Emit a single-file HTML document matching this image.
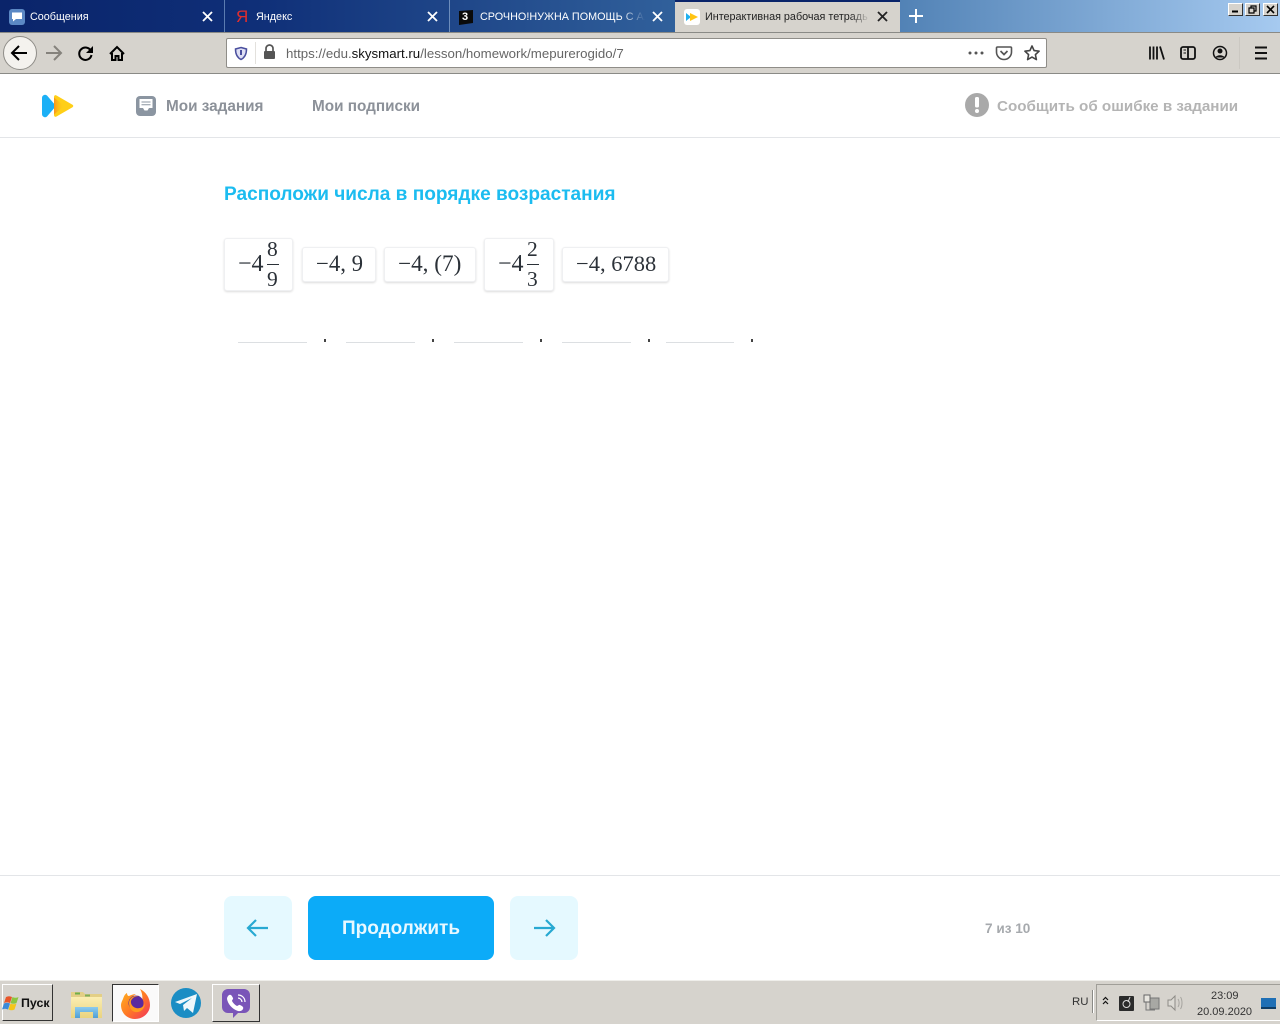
<!DOCTYPE html>
<html lang="ru"><head><meta charset="utf-8"><title>Интерактивная рабочая тетрадь</title>
<style>
html,body{margin:0;padding:0;width:1280px;height:1024px;overflow:hidden;background:#fff;font-family:"Liberation Sans","Noto Sans CJK SC",sans-serif}
.a,.t{position:absolute}
.t{white-space:nowrap;line-height:20px}
svg{position:absolute;overflow:visible}
.tab{font-size:10.8px;color:#fff;top:7px}
.card{position:absolute;box-sizing:border-box;background:#fff;border:1px solid #eff0f2;border-radius:3px;box-shadow:0 1px 2px rgba(0,0,0,.14)}
.m{font-family:"Liberation Serif","DejaVu Serif",serif;font-size:22.5px;color:#2b3138;position:absolute;white-space:nowrap;line-height:28px}
.slot{position:absolute;top:342px;height:1px;background:#dcdfe2;width:69px}
.p{position:absolute;top:339px;width:2px;height:3px;background:#444}
.nav{font-weight:bold;font-size:15.3px;color:#8c9199;top:97px}
.sq{position:absolute;top:896px;width:68px;height:64px;background:#e5f9ff;border-radius:8px}
.wb{position:absolute;top:3px;height:13px;background:#d6d3cd;border:1px solid #fff;border-right-color:#333;border-bottom-color:#333;box-sizing:border-box}
</style></head><body>

<div class="a" style="left:0;top:0;width:1280px;height:32px;background:linear-gradient(90deg,#0a246a 0%,#0f2f78 20%,#3a6ea5 62%,#a6caf0 100%)"></div>
<div class="a" style="left:224px;top:0;width:1px;height:32px;background:#5b7cb0"></div>
<div class="a" style="left:449px;top:0;width:1px;height:32px;background:#6d8dbc"></div>

<!-- Tab 1 -->
<svg style="left:0;top:0" width="40" height="32"><rect x="9" y="9" width="16" height="16" rx="3" fill="#5b88c4"/><path d="M12 12.500h10v6.500h-6l-3 2.500v-2.500h-1z" fill="#fff"/></svg>
<div class="t tab" style="left:30px">Сообщения</div>
<svg style="left:0;top:0" width="220" height="32"><path d="M203 12l9 9M212 12l-9 9" stroke="#fff" stroke-width="1.800"/></svg>

<!-- Tab 2 -->
<div class="t" style="left:236px;top:7px;font-size:17px;color:#e22d2d;line-height:20px">Я</div>
<div class="t tab" style="left:256px">Яндекс</div>
<svg style="left:0;top:0" width="445" height="32"><path d="M428 12l9 9M437 12l-9 9" stroke="#fff" stroke-width="1.800"/></svg>

<!-- Tab 3 -->
<svg style="left:0;top:0" width="480" height="32"><path d="M459 11l14-1v13l-14 2z" fill="#0a0a0a"/></svg>
<div class="t" style="left:462px;top:7px;font-size:11px;font-weight:bold;color:#fff">3</div>
<div class="t tab" style="left:480px;width:165px;overflow:hidden;-webkit-mask-image:linear-gradient(90deg,#000 85%,transparent);mask-image:linear-gradient(90deg,#000 85%,transparent)">СРОЧНО!НУЖНА ПОМОЩЬ С АЛГЕБРОЙ</div>
<svg style="left:0;top:0" width="670" height="32"><path d="M653 12l9 9M662 12l-9 9" stroke="#fff" stroke-width="1.800"/></svg>

<!-- Active tab -->
<div class="a" style="left:675px;top:2px;width:225px;height:31px;background:#d6d3cd"></div>
<div class="a" style="left:675px;top:0;width:225px;height:2px;background:#0a246a"></div>
<svg style="left:0;top:0" width="700" height="32"><rect x="684" y="9" width="16" height="16" rx="3" fill="#fff"/><path d="M686 13l5 4-5 4z" fill="#1fb0f0"/><path d="M690 13l8 4-8 4z" fill="#ffc414"/></svg>
<div class="t tab" style="left:705px;color:#222;width:165px;overflow:hidden;-webkit-mask-image:linear-gradient(90deg,#000 88%,transparent);mask-image:linear-gradient(90deg,#000 88%,transparent)">Интерактивная рабочая тетрадь</div>
<svg style="left:0;top:0" width="890" height="32"><path d="M878 12l9 9M887 12l-9 9" stroke="#222" stroke-width="1.800"/></svg>

<!-- New tab -->
<svg style="left:0;top:0" width="930" height="32"><path d="M916 9v14M909 16h14" stroke="#fff" stroke-width="2"/></svg>

<!-- Window buttons -->
<div class="wb" style="left:1228px;width:15px"></div>
<div class="wb" style="left:1245px;width:15px"></div>
<div class="wb" style="left:1263px;width:15px"></div>
<svg style="left:0;top:0" width="1280" height="20"><path d="M1232 11.500h6" stroke="#000" stroke-width="2"/><path d="M1251 8V6h5v5h-2M1249 8h5v5h-5z" fill="none" stroke="#000" stroke-width="1.200"/><path d="M1267 6l7 7M1274 6l-7 7" stroke="#000" stroke-width="1.600"/></svg>

<!-- Toolbar -->
<div class="a" style="left:0;top:32px;width:1280px;height:42px;background:#d6d3cd;border-top:1px solid #8a8a86;border-bottom:1px solid #8a8a86;box-sizing:border-box"></div>
<div class="a" style="left:3px;top:36px;width:34px;height:34px;box-sizing:border-box;border-radius:50%;background:#f4f2ee;border:1px solid #8f8d88"></div>
<svg style="left:0;top:0" width="140" height="74" fill="none">
<path d="M27 53H13M19 46l-7 7 7 7" stroke="#000" stroke-width="2"/>
<path d="M60 53H46M54 46l7 7-7 7" stroke="#85827c" stroke-width="2"/>
<path d="M91 51a6.200 6.200 0 1 0 .5 4" stroke="#000" stroke-width="2"/><path d="M93 46v7h-7z" fill="#000"/>
<path d="M110 54l7-7 7 7M112 53v7h3.500v-4h3v4h3.500v-7" stroke="#000" stroke-width="2"/>
</svg>

<!-- URL bar -->
<div class="a" style="left:226px;top:38px;width:821px;height:30px;box-sizing:border-box;background:#fff;border:1px solid #8f8d88;border-radius:2px"></div>
<div class="a" style="left:255px;top:42px;width:1px;height:22px;background:#e3e1dd"></div>
<svg style="left:0;top:0" width="300" height="74"><path d="M241 47.500l5.500 1.500c0 5-1.500 8.500-5.500 10.500-4-2-5.500-5.500-5.500-10.500z" fill="#dfe0f5" stroke="#4a4f9e" stroke-width="1.500"/><rect x="240" y="50" width="2" height="5" fill="#4a4f9e"/>
<path d="M266 51v-2.500a3.500 3.500 0 0 1 7 0V51" fill="none" stroke="#555" stroke-width="1.700"/><rect x="264" y="51" width="11" height="8" rx="1" fill="#555"/></svg>
<div class="t" style="left:286px;top:45px;font-size:13.27px;line-height:18px;color:#666">https://edu.<span style="color:#111">skysmart.ru</span>/lesson/homework/mepurerogido/7</div>
<svg style="left:0;top:0" width="1280" height="74" fill="none">
<circle cx="970" cy="53" r="1.500" fill="#555"/><circle cx="976" cy="53" r="1.500" fill="#555"/><circle cx="982" cy="53" r="1.500" fill="#555"/>
<path d="M997.500 47h13a1 1 0 0 1 1 1v4a7.500 7.500 0 0 1-15 0v-4a1 1 0 0 1 1-1z" stroke="#555" stroke-width="1.600"/><path d="M1000.500 51l3.500 3.500 3.500-3.500" stroke="#555" stroke-width="1.700"/>
<path d="M1032 46l2.100 4.600 5 .6-3.700 3.400 1 5-4.400-2.500-4.400 2.500 1-5-3.700-3.400 5-.6z" stroke="#444" stroke-width="1.600" stroke-linejoin="round"/>
<path d="M1150 46.500v13M1153.500 46.500v13M1157 46.500v13M1160 46.500l4 13" stroke="#111" stroke-width="1.800"/>
<rect x="1181" y="47" width="14" height="12" rx="2" stroke="#111" stroke-width="1.800"/><path d="M1188 47v12" stroke="#111" stroke-width="1.800"/><path d="M1183.500 50h2.500M1183.500 53h2.500" stroke="#111"/>
<circle cx="1220" cy="53" r="6.500" stroke="#111" stroke-width="1.500"/><circle cx="1220" cy="51" r="2.500" fill="#111"/><path d="M1215.500 57.500c1-3 8-3 9 0z" fill="#111"/>
<path d="M1239.500 37v32" stroke="#cbc8c2"/>
<path d="M1255 47.500h12M1255 53h12M1255 58.500h12" stroke="#111" stroke-width="2"/>
</svg>

<!-- Site header -->
<div class="a" style="left:0;top:137px;width:1280px;height:1px;background:#e3e5e8"></div>
<svg style="left:0;top:0" width="80" height="130">
<defs><linearGradient id="og" x1="0" x2="1" y1="0" y2="0"><stop offset="0" stop-color="#f7941d"/><stop offset="1" stop-color="#ffcf17" stop-opacity="0"/></linearGradient></defs>
<path d="M44 95c1-.5 2-.3 3 .5l9 10.500-9 10.500c-1 .8-2 1-3 .5-1.300-.6-2-1.500-2-3V98c0-1.500.7-2.400 2-3z" fill="#1cb0f6"/>
<path d="M54 97c0-1.500 1.300-2.300 2.500-1.500l16 9.300c1 .6 1 1.800 0 2.400l-16 9.300c-1.200.8-2.500 0-2.500-1.500z" fill="#ffcf17"/>
<path d="M54 97.500L64 106l-10 8.500z" fill="url(#og)"/>
</svg>
<svg style="left:0;top:0" width="170" height="130"><rect x="136" y="96" width="20" height="20" rx="4" fill="#8b95a1"/><path d="M139.500 99h13v9h-3.500l-1.500 2.500h-3L143 108h-3.500z" fill="#fff"/><path d="M141.500 102h9M141.500 104.700h9" stroke="#8b95a1"/></svg>
<div class="t nav" style="left:166px">Мои задания</div>
<div class="t nav" style="left:312px">Мои подписки</div>
<svg style="left:0;top:0" width="1000" height="130"><circle cx="977" cy="105" r="12" fill="#a9a9a9"/><rect x="975" y="97" width="4" height="10.500" rx="1.500" fill="#fff"/><circle cx="977" cy="111" r="2" fill="#fff"/></svg>
<div class="t" style="left:997px;top:97px;font-size:15.2px;font-weight:bold;color:#b4b4b4">Сообщить об ошибке в задании</div>

<!-- Task -->
<div class="t" style="left:224px;top:185px;font-size:19.08px;font-weight:bold;color:#1cbcf0">Расположи числа в порядке возрастания</div>

<div class="card" style="left:224px;top:238px;width:69px;height:53px"></div>
<div class="m" style="left:238px;top:250px;font-size:24px">−4</div>
<div class="m" style="left:267px;top:235px;font-size:21.5px">8</div>
<div class="a" style="left:267px;top:264px;width:12px;height:1px;background:#2b3138"></div>
<div class="m" style="left:267px;top:265px;font-size:21.5px">9</div>

<div class="card" style="left:302px;top:247px;width:74px;height:35px"></div>
<div class="m" style="left:316px;top:250px;font-size:22.8px">−4, 9</div>

<div class="card" style="left:384px;top:247px;width:92px;height:35px"></div>
<div class="m" style="left:398px;top:250px;font-size:23.2px">−4, (7)</div>

<div class="card" style="left:484px;top:238px;width:70px;height:53px"></div>
<div class="m" style="left:498px;top:250px;font-size:24px">−4</div>
<div class="m" style="left:527px;top:235px;font-size:21.5px">2</div>
<div class="a" style="left:527px;top:264px;width:12px;height:1px;background:#2b3138"></div>
<div class="m" style="left:527px;top:265px;font-size:21.5px">3</div>

<div class="card" style="left:562px;top:247px;width:107px;height:35px"></div>
<div class="m" style="left:576px;top:250px">−4, 6788</div>

<div class="slot" style="left:238px"></div><div class="p" style="left:324px"></div>
<div class="slot" style="left:346px"></div><div class="p" style="left:432px"></div>
<div class="slot" style="left:454px"></div><div class="p" style="left:540px"></div>
<div class="slot" style="left:562px"></div><div class="p" style="left:648px"></div>
<div class="slot" style="left:666px;width:68px"></div><div class="p" style="left:751px"></div>

<!-- Footer -->
<div class="a" style="left:0;top:875px;width:1280px;height:1px;background:#e3e5e8"></div>
<div class="sq" style="left:224px"></div>
<div class="a" style="left:308px;top:896px;width:186px;height:64px;background:#0cabf8;border-radius:8px"></div>
<div class="t" style="left:308px;top:919px;width:186px;text-align:center;font-size:19px;font-weight:bold;color:#e8f8ff">Продолжить</div>
<div class="sq" style="left:510px"></div>
<svg style="left:0;top:0" width="600" height="960" fill="none"><path d="M268 928h-19M256 920l-8 8 8 8" stroke="#27a9d2" stroke-width="2.200"/><path d="M534 928h19M546 920l8 8-8 8" stroke="#27a9d2" stroke-width="2.200"/></svg>
<div class="t" style="left:985px;top:919px;font-size:13.6px;font-weight:bold;color:#a6a9ad">7 из 10</div>

<!-- Taskbar -->
<div class="a" style="left:0;top:980px;width:1280px;height:44px;background:#d6d3cd;border-top:1px solid #efeeea;box-sizing:border-box"></div>
<div class="a" style="left:2px;top:984px;width:51px;height:37px;box-sizing:border-box;background:#d6d3cd;border:1px solid #fff;border-right-color:#333;border-bottom-color:#333"></div>
<svg style="left:0;top:0" width="24" height="1024"><path d="M6 997c2-1 4-1 6 0l-2 6c-2-1-4-1-6 0z" fill="#e8562a"/><path d="M12.500 997c2 1 4 1 6 0l-2 6c-2 1-4 1-6 0z" fill="#8cc63f"/><path d="M4 1003.500c2-1 4-1 6 0l-2 6c-2-1-4-1-6 0z" fill="#3b8ad9"/><path d="M10.500 1003.500c2 1 4 1 6 0l-2 6c-2 1-4 1-6 0z" fill="#f5c518"/></svg>
<div class="t" style="left:21px;top:993px;font-size:12.4px;font-weight:bold;color:#111">Пуск</div>

<svg style="left:0;top:0" width="110" height="1024"><defs><linearGradient id="fd" x1="0" x2="0" y1="0" y2="1"><stop offset="0" stop-color="#fbeeb2"/><stop offset="1" stop-color="#e9d37f"/></linearGradient><linearGradient id="fb" x1="0" x2="0" y1="0" y2="1"><stop offset="0" stop-color="#8ccbee"/><stop offset="1" stop-color="#4f9fd6"/></linearGradient></defs><path d="M71 992h12l2 2h17v24H71z" fill="#e3cf86"/><path d="M71 997h31v21H71z" fill="url(#fd)"/><rect x="75" y="992.500" width="5" height="2" fill="#6fae4a"/><rect x="85" y="994.500" width="5" height="2" fill="#7fae5a"/><path d="M75 1018v-11h23v11h-5v-6H80v6z" fill="url(#fb)"/></svg>

<div class="a" style="left:112px;top:984px;width:47px;height:38px;box-sizing:border-box;background:#fafafa;border:1px solid #333;border-right-color:#fff;border-bottom-color:#fff"></div>
<svg style="left:0;top:0" width="160" height="1024"><defs><linearGradient id="ff" x1="0" x2="1" y1="0" y2="1"><stop offset="0" stop-color="#ffb51f"/><stop offset=".5" stop-color="#ff7a24"/><stop offset="1" stop-color="#f2325e"/></linearGradient></defs>
<path d="M123 999c1-3 2-5 4-6 0 2 1 3 2 3 2-1 5-2 7-2-2 1-3 2-3 3 4 0 7 1 9 4 1-4 0-9-2-12 6 3 10 9 10 16 0 8-7 14-15 14s-14-6-14-14c0-2 1-4 2-6z" fill="url(#ff)"/>
<circle cx="136" cy="1003" r="7.500" fill="#5b2a9e"/><path d="M129 1003c0-5 5-8 10-7-4 0-7 2-8 5-.6 2 1 6 5 7 4 1 8-1 9-5 0 6-5 10-10 9-4-1-6-5-6-9z" fill="#ff9a1f"/></svg>

<svg style="left:0;top:0" width="210" height="1024"><circle cx="186" cy="1003" r="15" fill="#1b8dc4"/><path d="M175 1002l22-8-4 19-6-5-3 3-1-6 9-7-12 6z" fill="#eef7fb"/></svg>

<div class="a" style="left:212px;top:984px;width:48px;height:38px;box-sizing:border-box;background:#d6d3cd;border:1px solid #fff;border-right-color:#333;border-bottom-color:#333"></div>
<svg style="left:0;top:0" width="260" height="1024"><path d="M228 989h16a6 6 0 0 1 6 6v12a6 6 0 0 1-6 6h-6l-5 5v-5h-5a6 6 0 0 1-6-6v-12a6 6 0 0 1 6-6z" fill="#7a55b8"/><path d="M229 995c2-1 3 1 4 3 .5 1-1 2-1 3 1 2 3 4 5 5 1 0 2-1.500 3-1 2 1 4 2 3 4-1 2-3 2.500-5 2-6-2-10-7-11-12 0-2 1-3 2-4z" fill="#fff"/><path d="M238 995c4 0 7 3 7 7M238 998c2 0 4 2 4 4" stroke="#fff" fill="none" stroke-width="1.200"/></svg>

<div class="t" style="left:1072px;top:992px;font-size:11.4px;color:#333">RU</div>
<div class="a" style="left:1092px;top:990px;width:1px;height:23px;background:#8a8a86;border-right:1px solid #fff"></div>
<div class="a" style="left:1096px;top:984px;width:184px;height:37px;box-sizing:border-box;border:1px solid #a09e98;border-right:none;border-bottom-color:#fff"></div>
<svg style="left:0;top:0" width="1280" height="1024" fill="none">
<path d="M1103 1000l2.500-2.500 2.500 2.500M1103 1004l2.500-2.500 2.500 2.500" stroke="#111" stroke-width="1.200"/>
<rect x="1119" y="996" width="15" height="15" rx="1" fill="#2b2b2b"/><circle cx="1126.500" cy="1004" r="3.500" stroke="#ddd"/><path d="M1130 997l-2 5" stroke="#ddd"/>
<rect x="1150" y="998" width="9" height="11" fill="#a8a8a4" stroke="#777"/><rect x="1144" y="995" width="6" height="7" fill="#e8e6e0" stroke="#666"/><path d="M1146 1002v8h9" stroke="#777"/>
<path d="M1168 1000h3l4-4v14l-4-4h-3z" fill="#dcdad4" stroke="#8d8b86"/><path d="M1178 999c1.500 2 1.500 6 0 8M1180.500 997c2 3 2 9 0 12" stroke="#a6a49f"/>
<rect x="1261" y="998" width="15" height="11" fill="#1f6fb5"/><rect x="1261" y="1007" width="15" height="2" fill="#0f3d66"/>
</svg>
<div class="t" style="left:1211px;top:986px;font-size:11px;color:#333">23:09</div>
<div class="t" style="left:1197px;top:1002px;font-size:11px;color:#333">20.09.2020</div>
</body></html>
